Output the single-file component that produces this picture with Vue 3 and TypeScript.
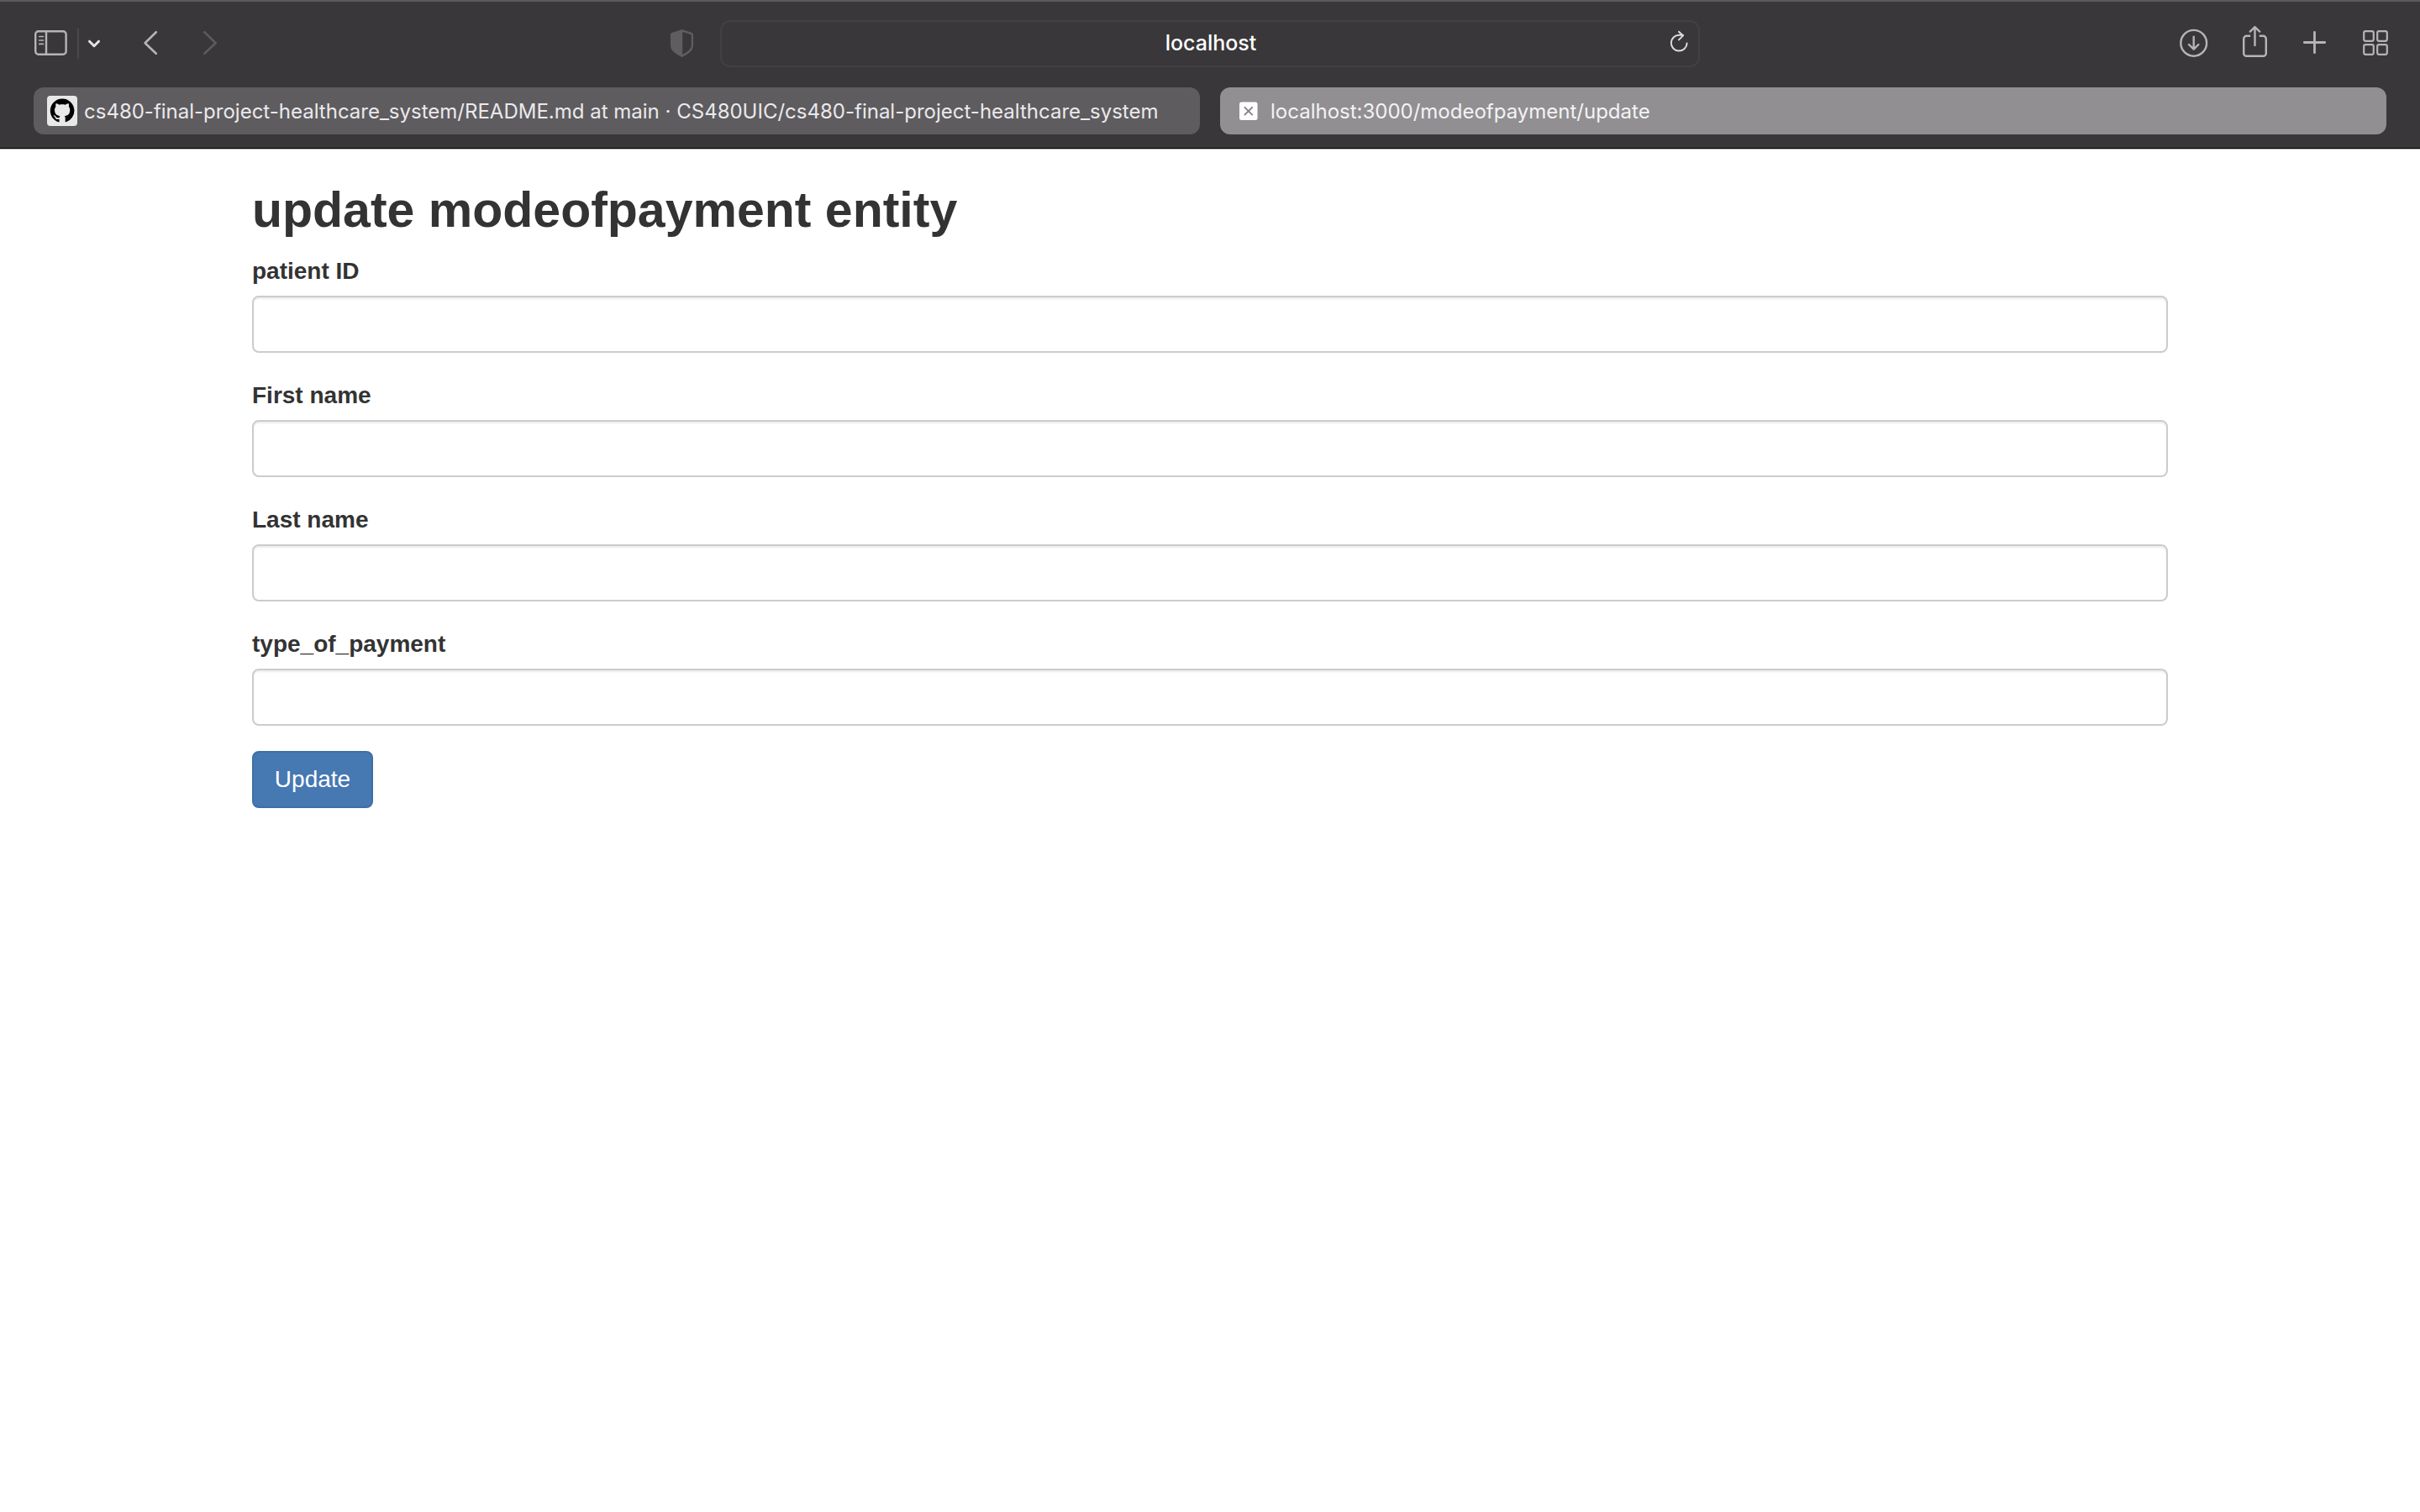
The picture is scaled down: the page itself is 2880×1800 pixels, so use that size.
<script setup lang="ts">
import { reactive, ref } from 'vue'

interface Field {
  id: string
  label: string
}

const address = ref('localhost')

const fields: Field[] = [
  { id: 'patient-id', label: 'patient ID' },
  { id: 'first-name', label: 'First name' },
  { id: 'last-name', label: 'Last name' },
  { id: 'type-of-payment', label: 'type_of_payment' },
]

const values = reactive<Record<string, string>>({
  'patient-id': '',
  'first-name': '',
  'last-name': '',
  'type-of-payment': '',
})
</script>

<template>
  <div class="window">
    <header class="chrome">
      <div class="toolbar">
        <div class="side left">
          <button type="button" class="icon" aria-label="Sidebar">
            <svg width="40" height="44" viewBox="0 0 40 44" fill="none" stroke="currentColor" stroke-width="2.4">
              <rect x="2.2" y="7.2" width="36.4" height="27.6" rx="3.6" />
              <path d="M15 7v28" />
              <path d="M6.800 13.500h4.600M6.800 18h4.600M6.800 22.400h4.600" stroke-width="1.700" stroke-linecap="round" />
            </svg>
          </button>
          <span class="divider"></span>
          <button type="button" class="icon bright" aria-label="Tab groups">
            <svg width="16" height="44" viewBox="0 0 16 44" fill="none" stroke="currentColor" stroke-width="3" stroke-linecap="round" stroke-linejoin="round">
              <path d="M2.500 19.200l5.500 5.500 5.500-5.500" />
            </svg>
          </button>
          <button type="button" class="icon back" aria-label="Back">
            <svg width="18" height="44" viewBox="0 0 18 44" fill="none" stroke="currentColor" stroke-width="2.600" stroke-linecap="round" stroke-linejoin="round">
              <path d="M15.800 8.200L2.600 21.200l13.200 12.600" />
            </svg>
          </button>
          <button type="button" class="icon dim forward" aria-label="Forward">
            <svg width="20" height="44" viewBox="0 0 20 44" fill="none" stroke="currentColor" stroke-width="2.600" stroke-linecap="round" stroke-linejoin="round">
              <path d="M3.300 8.200l13.400 13-13.400 12.600" />
            </svg>
          </button>
          <button type="button" class="icon shade shield" aria-label="Privacy report">
            <svg width="28" height="44" viewBox="0 0 28 44">
              <path d="M13.600 5L1.600 9Q0 9.600 0 11.200V24c0 7 7.500 10.700 13.600 14.200C19.700 34.700 27 31 27 24V11.200Q27 9.600 25.600 9Z" fill="currentColor" />
              <path d="M14.200 7.700L23.800 11Q24.800 11.300 24.800 12.300V23.600c0 5.600-5.600 8.500-10.600 11.300Z" fill="#39373a" />
            </svg>
          </button>
        </div>

        <div class="address">
          <input v-model="address" type="text" aria-label="Address" />
          <button type="button" class="icon reload" aria-label="Reload">
            <svg width="24" height="44" viewBox="0 0 24 44" fill="none" stroke="currentColor" stroke-width="2" stroke-linecap="round" stroke-linejoin="round">
              <path d="M21.600 21.500a9.400 9.400 0 1 1-9.400-9.700h4.600" />
              <path d="M12 7.800l5 4.600-5 5" />
            </svg>
          </button>
        </div>

        <div class="side right">
          <button type="button" class="icon" aria-label="Downloads">
            <svg width="34" height="44" viewBox="0 0 34 44" fill="none" stroke="currentColor" stroke-width="2.400" stroke-linecap="round" stroke-linejoin="round">
              <circle cx="16.700" cy="21.300" r="15.400" />
              <path d="M16.700 13.800v14.600M11 23l5.700 5.600 5.700-5.600" />
            </svg>
          </button>
          <button type="button" class="icon" aria-label="Share">
            <svg width="32" height="44" viewBox="0 0 32 44" fill="none" stroke="currentColor" stroke-width="2.400" stroke-linecap="round" stroke-linejoin="round">
              <path d="M10.200 12.800H5.600a3.400 3.400 0 0 0-3.400 3.400V33.400a3.400 3.400 0 0 0 3.400 3.400H25.400a3.400 3.400 0 0 0 3.400-3.400V16.200a3.400 3.400 0 0 0-3.400-3.400H20.800" stroke-linecap="butt" />
              <path d="M15.500 24V2.400M9.800 7.600l5.700-5.500 5.700 5.500" />
            </svg>
          </button>
          <button type="button" class="icon" aria-label="New tab">
            <svg width="32" height="44" viewBox="0 0 32 44" fill="none" stroke="currentColor" stroke-width="2.800" stroke-linecap="round">
              <path d="M14.500 8.300v24.400M2.300 20.500h24.400" />
            </svg>
          </button>
          <button type="button" class="icon" aria-label="Tab overview">
            <svg width="30" height="44" viewBox="0 0 30 44" fill="none" stroke="currentColor" stroke-width="2.200">
              <rect x="1.200" y="7.200" width="11.600" height="11.600" rx="2" />
              <rect x="17.200" y="7.200" width="11.600" height="11.600" rx="2" />
              <rect x="1.200" y="23.200" width="11.600" height="11.600" rx="2" />
              <rect x="17.200" y="23.200" width="11.600" height="11.600" rx="2" />
            </svg>
          </button>
        </div>
      </div>

      <nav class="tabs">
        <a class="tab" href="#readme">
          <svg class="favicon" width="36" height="36" viewBox="0 0 36 36">
            <rect width="36" height="36" rx="4" fill="#e8e8e8" />
            <path transform="translate(3.800 3.400) scale(1.790)" fill="#000" d="M8 0C3.580 0 0 3.580 0 8c0 3.540 2.290 6.530 5.470 7.590.4.070.55-.17.55-.38 0-.19-.01-.82-.01-1.490-2.010.37-2.530-.49-2.690-.94-.09-.23-.48-.94-.82-1.130-.28-.15-.68-.52-.01-.53.63-.01 1.080.58 1.230.82.72 1.210 1.870.87 2.330.66.07-.52.28-.87.51-1.070-1.780-.2-3.640-.89-3.640-3.950 0-.87.31-1.590.82-2.150-.08-.2-.36-1.020.08-2.120 0 0 .67-.21 2.200.82.64-.18 1.320-.27 2-.27s1.360.09 2 .27c1.530-1.040 2.200-.82 2.200-.82.44 1.100.16 1.920.08 2.120.51.56.82 1.270.82 2.150 0 3.070-1.870 3.750-3.650 3.950.29.25.54.73.54 1.480 0 1.070-.01 1.930-.01 2.200 0 .21.15.46.55.38A8.010 8.010 0 0 0 16 8c0-4.420-3.580-8-8-8z" />
          </svg>
          <span class="title">cs480-final-project-healthcare_system/README.md at main · CS480UIC/cs480-final-project-healthcare_system</span>
        </a>
        <a class="tab active" href="#update" aria-current="page">
          <svg class="favicon" width="36" height="36" viewBox="0 0 36 36">
            <rect x="7" y="7.500" width="21.500" height="21.500" rx="2.500" fill="#fff" />
            <path d="M13.400 13.800l8.800 8.800M22.200 13.800l-8.800 8.800" stroke="#858386" stroke-width="1.900" stroke-linecap="round" />
          </svg>
          <span class="title">localhost:3000/modeofpayment/update</span>
        </a>
      </nav>
    </header>

    <main class="container">
      <h2>update modeofpayment entity</h2>
      <form @submit.prevent>
        <div v-for="field in fields" :key="field.id" class="group">
          <label :for="field.id">{{ field.label }}</label>
          <input :id="field.id" v-model="values[field.id]" type="text" />
        </div>
        <button type="submit" class="submit">Update</button>
      </form>
    </main>
  </div>
</template>

<style>
body {
  margin: 0;
  background: #fff;
}
</style>

<style scoped>
.window,
.window * {
  box-sizing: border-box;
}

.window {
  color: #333;
  font-family: "Liberation Sans", Arial, sans-serif;
  font-size: 28px;
  line-height: 40px;
}

.chrome {
  border-top: 2px solid #5c5a5d;
  border-bottom: 1px solid #000;
  background: #39373a;
  box-shadow: 0 1px 0 #b8b8b8;
  font-family: Inter, sans-serif;
}

.toolbar {
  display: grid;
  grid-template-columns: 1fr minmax(0, 1166px) 1fr;
  align-items: center;
  height: 100px;
  padding: 0 38px;
}

.side {
  display: flex;
  align-items: center;
}

.left {
  padding-left: 2px;
}

.right {
  justify-content: flex-end;
  gap: 40px;
}

.icon {
  display: flex;
  padding: 0;
  border: 0;
  background: none;
  color: #b6b4b7;
}

.icon svg {
  display: block;
}

.bright {
  color: #e6e4e7;
}

.dim {
  color: #5c5a5d;
}

.shade {
  color: #5f5d60;
}

.divider {
  width: 2px;
  height: 36px;
  margin: 0 10px 0 12px;
  background: #4b494c;
}

.back {
  margin-left: 50px;
}

.forward {
  margin-left: 52px;
}

.shield {
  margin-right: 31px;
  margin-left: auto;
}

.address {
  display: flex;
  align-items: center;
  height: 56px;
  padding: 0 11px 0 35px;
  border: 2px solid #424043;
  border-radius: 12px;
}

.address input {
  flex: 1;
  min-width: 0;
  height: 40px;
  padding: 0 0 2px 2px;
  border: 0;
  outline: 0;
  background: none;
  color: #fff;
  font: inherit;
  font-size: 25px;
  font-weight: 500;
  text-align: center;
}

.reload {
  color: #dddbde;
}

.tabs {
  display: flex;
  gap: 24px;
  padding: 2px 40px 16px;
}

.tab {
  display: flex;
  flex: 1 1 0;
  align-items: center;
  gap: 8px;
  min-width: 0;
  height: 56px;
  padding: 0 16px;
  border-radius: 12px;
  background: #5e5c5f;
  color: #ebe9ec;
  font-size: 24px;
  text-decoration: none;
}

.active {
  background: #918f92;
  color: #f4f3f5;
}

.favicon {
  flex: none;
}

.title {
  overflow: hidden;
  padding-top: 2px;
  white-space: nowrap;
}

.container {
  max-width: 2340px;
  margin: 0 auto;
  padding: 39px 30px;
}

h2 {
  margin: 0 0 18px;
  font-size: 59px;
  font-weight: 700;
  line-height: 68px;
}

.group {
  margin-bottom: 30px;
}

.group label {
  display: block;
  margin-bottom: 8px;
  font-weight: 700;
  line-height: 42px;
}

.group input {
  display: block;
  width: 100%;
  height: 68px;
  padding: 12px 24px;
  border: 2px solid #ccc;
  border-radius: 8px;
  outline: 0;
  background: #fff;
  box-shadow: inset 0 2px 2px rgba(0, 0, 0, 0.075);
  color: #555;
  font: inherit;
}

.submit {
  display: block;
  min-width: 144px;
  padding: 12px 24px;
  border: 2px solid #3f6fa5;
  border-radius: 8px;
  background: #4678b2;
  color: #fff;
  font: inherit;
}
</style>
